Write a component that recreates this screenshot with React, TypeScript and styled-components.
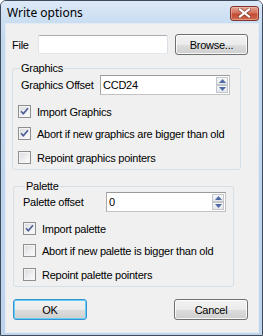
import styled, { createGlobalStyle } from "styled-components";

const GlobalStyle = createGlobalStyle`
  html, body {
    margin: 0;
    padding: 0;
    background: #ffffff;
  }
  * {
    box-sizing: border-box;
  }
`;

function CheckMark() {
  return (
    <svg width="13" height="13" viewBox="0 0 13 13">
      <path
        d="M3 6.2 L5.3 8.8 L10 3.2"
        fill="none"
        stroke="#4c5f97"
        strokeWidth="1.7"
        strokeLinejoin="round"
      />
    </svg>
  );
}

function CloseGlyph() {
  return (
    <svg width="13" height="10" viewBox="0 0 13 10">
      <path
        d="M2 1.5 L11 8.5 M11 1.5 L2 8.5"
        stroke="#5a2a22"
        strokeWidth="3.6"
        strokeLinecap="square"
        opacity="0.55"
      />
      <path
        d="M2 1.5 L11 8.5 M11 1.5 L2 8.5"
        stroke="#ffffff"
        strokeWidth="2.2"
        strokeLinecap="square"
      />
    </svg>
  );
}

function Arrow({ up }: { up?: boolean }) {
  return (
    <svg width="7" height="4" viewBox="0 0 7 4">
      <path d={up ? "M0 4 L3.5 0 L7 4 Z" : "M0 0 L3.5 4 L7 0 Z"} fill="#4d6aa5" />
    </svg>
  );
}

type CheckProps = { label: string; checked?: boolean; top: number };

function Check({ label, checked, top }: CheckProps) {
  return (
    <CheckRow $top={top}>
      <Box>{checked && <CheckMark />}</Box>
      <span>{label}</span>
    </CheckRow>
  );
}

type SpinProps = { value: string; width: number };

function Spinner({ value, width }: SpinProps) {
  return (
    <SpinBox style={{ width }}>
      <SpinValue>{value}</SpinValue>
      <SpinButtons>
        <SpinButton>
          <Arrow up />
        </SpinButton>
        <SpinButton>
          <Arrow />
        </SpinButton>
      </SpinButtons>
    </SpinBox>
  );
}

export default function App() {
  return (
    <>
      <GlobalStyle />
      <Window>
        <TitleBar>
          <Title>Write options</Title>
          <CloseButton>
            <CloseGlyph />
          </CloseButton>
        </TitleBar>
        <Client>
          <FileRow>
            <FileLabel>File</FileLabel>
            <TextBox />
            <Button $width={73}>Browse...</Button>
          </FileRow>

          <Group $left={7} $width={229} $pad={5} $top={7}>
            <Legend>Graphics</Legend>
            <OffsetRow $top={1}>
              <OffsetLabel $indent={3} $width={82}>
                Graphics Offset
              </OffsetLabel>
              <Spinner value="CCD24" width={130} />
            </OffsetRow>
            <Check label="Import Graphics" checked top={10} />
            <Check label="Abort if new graphics are bigger than old" checked top={9} />
            <Check label="Repoint graphics pointers" top={11} />
          </Group>

          <Group $left={8} $width={221} $pad={9} $top={10}>
            <Legend>Palette</Legend>
            <OffsetRow $top={0}>
              <OffsetLabel $indent={0} $width={83}>
                Palette offset
              </OffsetLabel>
              <Spinner value="0" width={120} />
            </OffsetRow>
            <Check label="Import palette" checked top={10} />
            <Check label="Abort if new palette is bigger than old" top={9} />
            <Check label="Repoint palette pointers" top={11} />
          </Group>

          <ButtonRow>
            <Button $width={74} $default>
              OK
            </Button>
            <Button $width={74}>Cancel</Button>
          </ButtonRow>
        </Client>
      </Window>
    </>
  );
}

const Window = styled.div`
  width: 263px;
  height: 336px;
  display: flex;
  flex-direction: column;
  border: 1px solid #3f4b5b;
  border-radius: 6px 6px 0 0;
  background: linear-gradient(#d6e5f5, #c2d8ef 40px, #bdd4ec);
  font-family: "Liberation Sans", Arial, sans-serif;
  font-size: 11px;
  letter-spacing: -0.25px;
  white-space: nowrap;
  color: #000;
`;

const TitleBar = styled.div`
  height: 22px;
  display: flex;
  align-items: center;
  justify-content: space-between;
  padding: 0 3px 0 6px;
  background: linear-gradient(#dce9f7, #c9ddf2);
  border-radius: 5px 5px 0 0;
`;

const Title = styled.div`
  font-family: "Noto Sans", "Open Sans", sans-serif;
  font-size: 12px;
  letter-spacing: 0;
  margin-top: 1px;
`;

const CloseButton = styled.div`
  width: 29px;
  height: 15px;
  margin-top: 2px;
  display: flex;
  align-items: center;
  justify-content: center;
  border: 1px solid #80352a;
  border-radius: 3px;
  background: linear-gradient(#e7a190, #d2735d 45%, #c24a33 55%, #cf6a4f);
  box-shadow: inset 0 0 0 1px rgba(255, 210, 200, 0.45);
`;

const Client = styled.div`
  flex: 1;
  margin: 0 3px 2px 4px;
  background: #f0f0f0;
  border: 1px solid #e4ebf3;
  display: flex;
  flex-direction: column;
  padding-top: 10px;
`;

const FileRow = styled.div`
  display: flex;
  align-items: center;
  height: 21px;
  padding-left: 6px;
`;

const FileLabel = styled.span`
  width: 26px;
`;

const TextBox = styled.div`
  width: 130px;
  height: 19px;
  margin-right: 7px;
  background: #fff;
  border: 1px solid;
  border-color: #abadb3 #dbdfe6 #e3e9ef #e2e3ea;
  border-radius: 2px;
`;

const Button = styled.div<{ $width: number; $default?: boolean }>`
  width: ${(p) => p.$width}px;
  height: 21px;
  display: flex;
  align-items: center;
  justify-content: center;
  border: 1px solid ${(p) => (p.$default ? "#3c8fd0" : "#707070")};
  border-radius: 3px;
  background: linear-gradient(#f2f2f2, #ebebeb 50%, #dddddd 51%, #cfcfcf);
  box-shadow: inset 0 0 0 1px
    ${(p) => (p.$default ? "#5fd3f7" : "rgba(255, 255, 255, 0.8)")};
  font-size: 11px;
`;

const Group = styled.fieldset<{ $left: number; $width: number; $pad: number; $top: number }>`
  margin: ${(p) => p.$top}px 0 0 ${(p) => p.$left - 1}px;
  width: ${(p) => p.$width}px;
  padding: 0 6px 5px ${(p) => p.$pad}px;
  border: 1px solid #d5dfe5;
  border-radius: 3px;
  min-width: 0;
`;

const Legend = styled.legend`
  padding: 0 1px;
  margin-left: 2px;
  line-height: 12px;
  font-size: 11px;
`;

const OffsetRow = styled.div<{ $top: number }>`
  display: flex;
  align-items: center;
  margin-top: ${(p) => p.$top}px;
  height: 20px;
`;

const OffsetLabel = styled.span<{ $indent: number; $width: number }>`
  margin-left: ${(p) => p.$indent}px;
  width: ${(p) => p.$width - p.$indent}px;
`;

const SpinBox = styled.div`
  height: 20px;
  display: flex;
  align-items: stretch;
  background: #fff;
  border: 1px solid #9a9a9a;
  border-color: #9a9a9a #c2c2c2 #c2c2c2 #a8a8a8;
`;

const SpinValue = styled.div`
  flex: 1;
  padding-left: 2px;
  display: flex;
  align-items: center;
  font-size: 11px;
`;

const SpinButtons = styled.div`
  width: 13px;
  display: flex;
  flex-direction: column;
  padding: 1px 1px 1px 0;
`;

const SpinButton = styled.div`
  flex: 1;
  display: flex;
  align-items: center;
  justify-content: center;
  border: 1px solid #c3c6cc;
  background: linear-gradient(#f7f7f7, #e4e6ea);
`;

const CheckRow = styled.div<{ $top: number }>`
  display: flex;
  align-items: center;
  gap: 6px;
  height: 13px;
  margin-top: ${(p) => p.$top}px;
`;

const Box = styled.div`
  width: 13px;
  height: 13px;
  flex: none;
  border: 1px solid #8e8f8f;
  background: linear-gradient(135deg, #d8dadf, #f4f4f4 70%, #ffffff);
  box-shadow: inset 0 0 0 1px #f4f4f4;
  position: relative;

  svg {
    position: absolute;
    left: -1px;
    top: -1px;
  }
`;

const ButtonRow = styled.div`
  display: flex;
  justify-content: space-between;
  padding: 0 10px 0 7px;
  margin-top: 12px;
`;
